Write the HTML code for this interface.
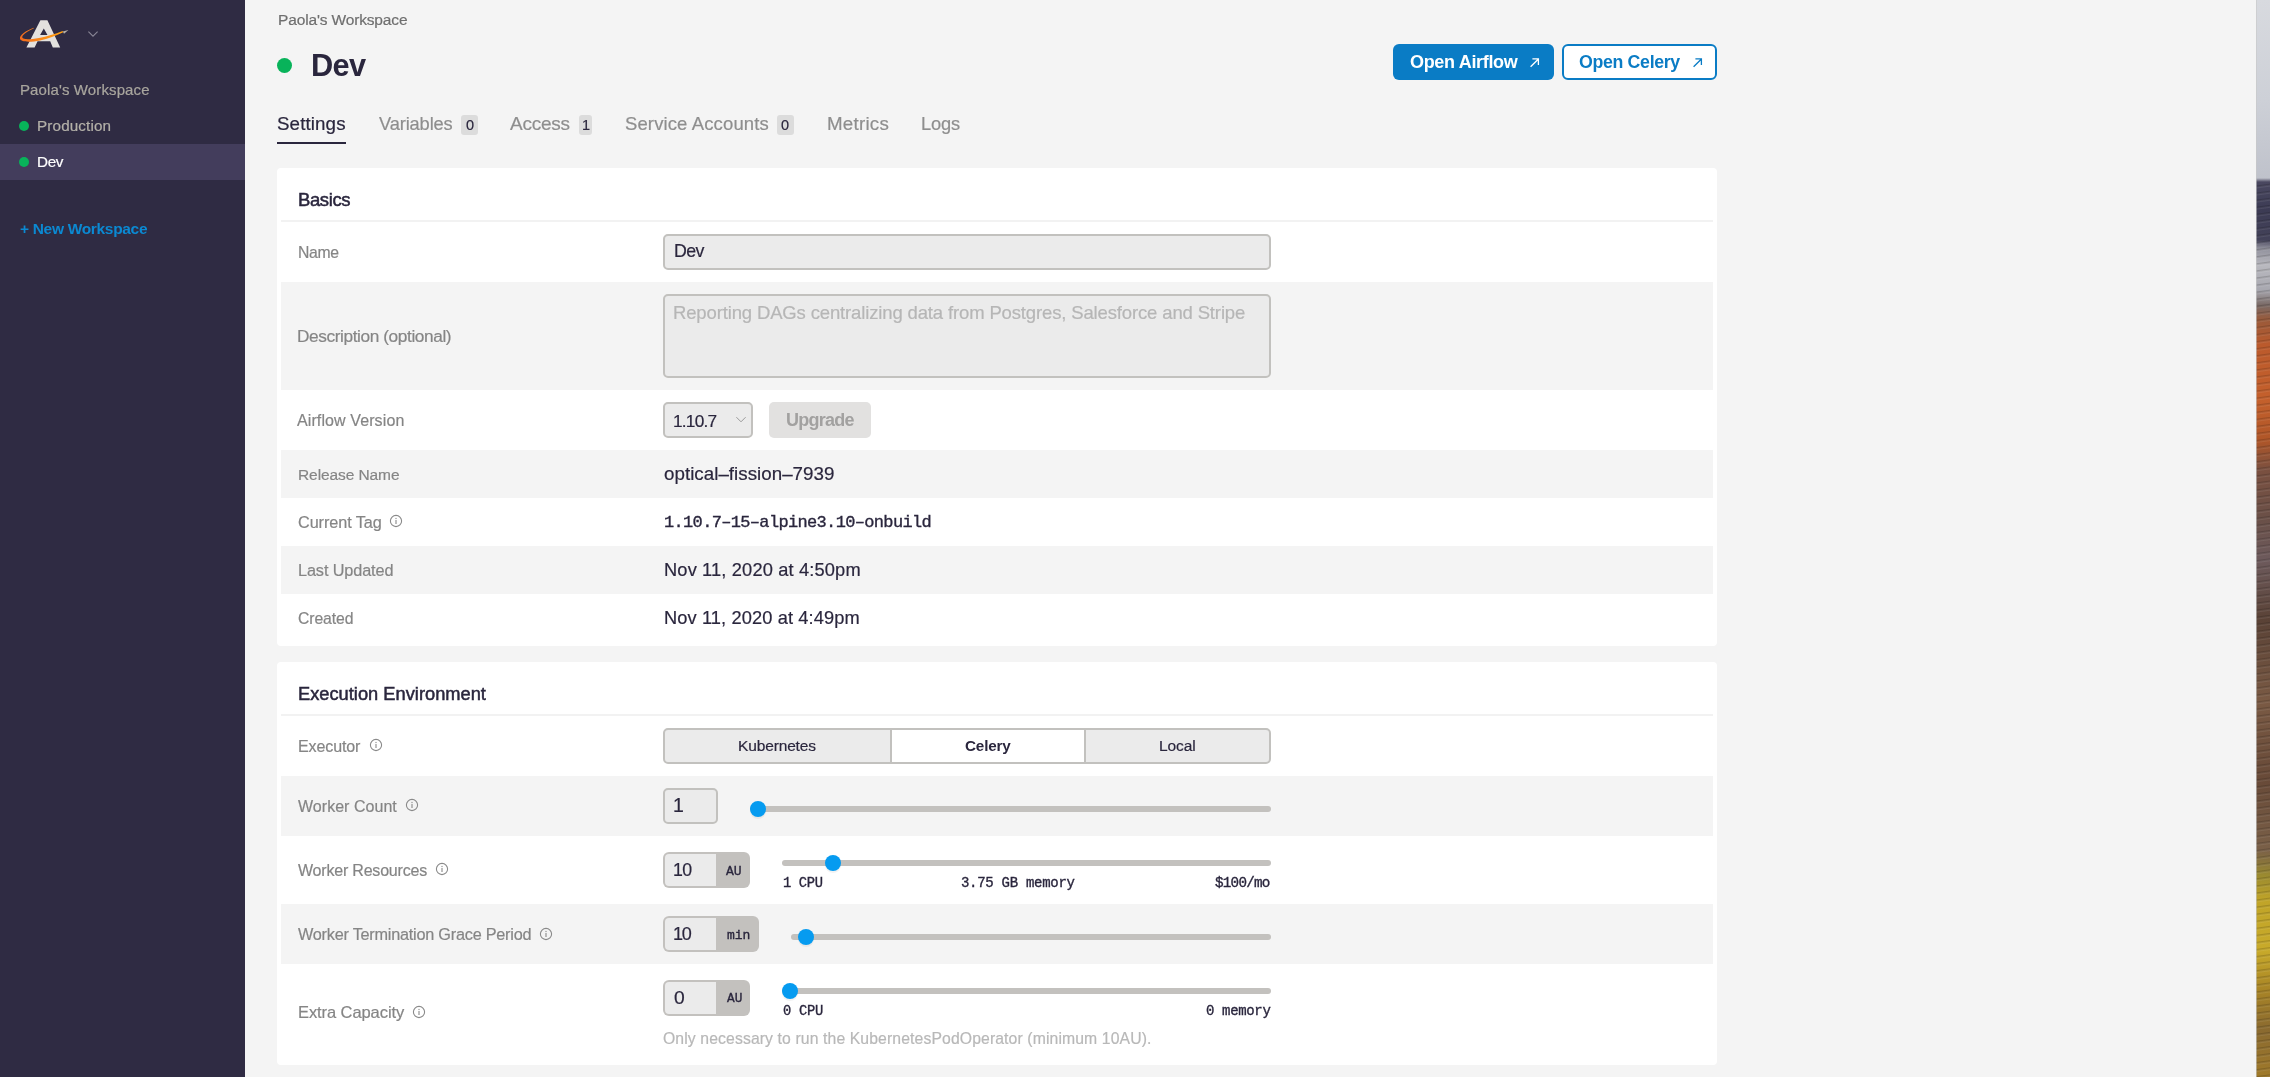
<!DOCTYPE html>
<html><head><meta charset="utf-8"><style>
html,body{margin:0;padding:0;width:2270px;height:1077px;overflow:hidden;background:#f4f4f4;}
.b{position:absolute;}
.t{position:absolute;line-height:1;white-space:nowrap;will-change:transform;-webkit-text-stroke:0.2px currentColor;}
</style></head><body>
<div class="b" style="left:0px;top:0px;width:245px;height:1077px;background:#2f2b43;"></div>
<div class="b" style="left:0px;top:144px;width:245px;height:36px;background:#433d5c;"></div>
<svg class="b" style="left:0;top:0" width="120" height="60" viewBox="0 0 120 60">
<defs><linearGradient id="sw" x1="0" x2="1" y1="0" y2="0"><stop offset="0" stop-color="#f26a1f"/><stop offset="0.5" stop-color="#fb8a18"/><stop offset="1" stop-color="#ffa112"/></linearGradient></defs>
<path d="M40.4 20.3 L47.4 20.3 L60.2 47.6 L52.8 47.6 L50.2 41.2 L37.6 41.2 L34.6 47.6 L26.4 47.6 Z M43.8 28.6 L40.1 34.9 L47.5 34.9 Z" fill="#e3e1de" fill-rule="evenodd"/>
<path d="M33.6 27.8 C26 30.8, 19.2 35.2, 20.0 38.8 C20.9 42.4, 31 42.2, 40 40.4 C48 38.8, 56 35.6, 63.2 32.2 L62.6 31.0 C55 34, 47 36.6, 39 38.0 C30 39.6, 23.2 39.8, 22.3 37.6 C21.6 35.4, 27 31.4, 33.9 28.3 Z" fill="url(#sw)"/>
<path d="M62.8 31.4 L68.4 30.0 L64.0 33.8 Z" fill="#b8b2a8"/>
<path d="M88.4 31.6 L93 36.2 L97.6 31.6" fill="none" stroke="#8a8796" stroke-width="1.1"/>
</svg>
<div class="t" style="left:19.50px;top:82.00px;font-size:15.00px;color:#a9a69e;font-weight:400;font-family:'Liberation Sans', sans-serif;letter-spacing:0.116px;">Paola's Workspace</div>
<div class="b" style="left:19px;top:121px;width:10px;height:10px;border-radius:50%;background:#08b35a;"></div>
<div class="t" style="left:37.30px;top:118.00px;font-size:15.25px;color:#b4b1a9;font-weight:400;font-family:'Liberation Sans', sans-serif;letter-spacing:0.132px;">Production</div>
<div class="b" style="left:19px;top:157px;width:10px;height:10px;border-radius:50%;background:#08b35a;"></div>
<div class="t" style="left:37.30px;top:154.00px;font-size:15.25px;color:#ffffff;font-weight:400;font-family:'Liberation Sans', sans-serif;letter-spacing:-0.357px;">Dev</div>
<div class="t" style="left:19.70px;top:221.00px;font-size:15.50px;color:#0b89d2;font-weight:700;font-family:'Liberation Sans', sans-serif;letter-spacing:-0.318px;-webkit-text-stroke:0;">+ New Workspace</div>
<div class="b" style="left:245px;top:0px;width:2011px;height:1077px;background:#f4f4f4;"></div>
<div class="b" style="left:2256px;top:0px;width:14px;height:1077px;background:linear-gradient(180deg,#d8dadf 0px,#cdd0d7 100px,#bfc2cb 178px,#4a4860 182px,#3c3b54 210px,#434259 240px,#8e8e9a 248px,#b9b9bf 265px,#a8a8b0 290px,#7a6a66 305px,#9a5a3a 320px,#bb5a2c 345px,#c4602c 400px,#b05628 440px,#7a5040 470px,#6a5048 520px,#6d5a5c 560px,#5a4236 620px,#7a5a44 700px,#684a38 780px,#7a6048 850px,#9a8a30 875px,#c0a428 900px,#c8aa2a 950px,#a88426 990px,#8a6a30 1030px,#a07a2a 1077px);"></div>
<div class="b" style="left:2256px;top:182px;width:14px;height:895px;background:repeating-linear-gradient(172deg,rgba(0,0,0,0) 0px,rgba(0,0,0,0) 3px,rgba(0,0,0,0.16) 4px,rgba(255,255,255,0.08) 6px,rgba(0,0,0,0) 7px);"></div>
<div class="b" style="left:2256px;top:0px;width:1px;height:1077px;background:rgba(200,200,200,0.6);"></div>
<div class="t" style="left:277.50px;top:12.00px;font-size:15.50px;color:#6f6f6f;font-weight:400;font-family:'Liberation Sans', sans-serif;letter-spacing:-0.150px;">Paola's Workspace</div>
<div class="b" style="left:277px;top:58px;width:15px;height:15px;border-radius:50%;background:#08b35a;"></div>
<div class="t" style="left:311.00px;top:51.00px;font-size:30.75px;color:#2a263d;font-weight:700;font-family:'Liberation Sans', sans-serif;letter-spacing:-0.698px;-webkit-text-stroke:0;">Dev</div>
<div class="b" style="left:1393px;top:44px;width:161px;height:36px;background:#0a7cc5;border-radius:6px;"></div>
<div class="t" style="left:1409.60px;top:53.00px;font-size:18.00px;color:#ffffff;font-weight:700;font-family:'Liberation Sans', sans-serif;letter-spacing:-0.324px;-webkit-text-stroke:0;">Open Airflow</div>
<div class="b" style="left:1562px;top:44px;width:155px;height:36px;background:#ffffff;border:2px solid #0a7cc5;border-radius:6px;box-sizing:border-box;"></div>
<div class="t" style="left:1578.70px;top:54.00px;font-size:17.75px;color:#0a7cc5;font-weight:700;font-family:'Liberation Sans', sans-serif;letter-spacing:-0.337px;-webkit-text-stroke:0;">Open Celery</div>
<svg class="b" style="left:1528.7px;top:57px" width="12" height="12" viewBox="0 0 12 12"><path d="M1.6 9.8 L9.2 2.2 M3.4 1.9 L9.4 1.9 L9.4 7.9" fill="none" stroke="#ffffff" stroke-width="1.3"/></svg>
<svg class="b" style="left:1691.7px;top:57px" width="12" height="12" viewBox="0 0 12 12"><path d="M1.6 9.8 L9.2 2.2 M3.4 1.9 L9.4 1.9 L9.4 7.9" fill="none" stroke="#0a7cc5" stroke-width="1.3"/></svg>
<div class="t" style="left:277.40px;top:115.00px;font-size:18.75px;color:#2a263d;font-weight:400;font-family:'Liberation Sans', sans-serif;letter-spacing:0.108px;">Settings</div>
<div class="b" style="left:277px;top:142px;width:69px;height:2px;background:#2a263d;"></div>
<div class="t" style="left:378.70px;top:115.00px;font-size:18.25px;color:#8e8e8e;font-weight:400;font-family:'Liberation Sans', sans-serif;letter-spacing:-0.129px;">Variables</div>
<div class="b" style="left:461px;top:115px;width:17px;height:20px;background:#dcdcdc;border-radius:3px;"></div>
<div class="t" style="left:465.50px;top:118.00px;font-size:14.50px;color:#2a263d;font-weight:400;font-family:'Liberation Sans', sans-serif;">0</div>
<div class="t" style="left:510.20px;top:114.00px;font-size:19.00px;color:#8e8e8e;font-weight:400;font-family:'Liberation Sans', sans-serif;letter-spacing:-0.227px;">Access</div>
<div class="b" style="left:579px;top:115px;width:13px;height:20px;background:#dcdcdc;border-radius:3px;"></div>
<div class="t" style="left:582.40px;top:118.00px;font-size:14.50px;color:#2a263d;font-weight:400;font-family:'Liberation Sans', sans-serif;">1</div>
<div class="t" style="left:624.60px;top:115.00px;font-size:18.50px;color:#8e8e8e;font-weight:400;font-family:'Liberation Sans', sans-serif;letter-spacing:0.120px;">Service Accounts</div>
<div class="b" style="left:777px;top:115px;width:17px;height:20px;background:#dcdcdc;border-radius:3px;"></div>
<div class="t" style="left:781.30px;top:118.00px;font-size:14.50px;color:#2a263d;font-weight:400;font-family:'Liberation Sans', sans-serif;">0</div>
<div class="t" style="left:826.50px;top:115.00px;font-size:18.75px;color:#8e8e8e;font-weight:400;font-family:'Liberation Sans', sans-serif;letter-spacing:0.231px;">Metrics</div>
<div class="t" style="left:921.10px;top:115.00px;font-size:18.25px;color:#8e8e8e;font-weight:400;font-family:'Liberation Sans', sans-serif;letter-spacing:-0.189px;">Logs</div>
<div class="b" style="left:277px;top:168px;width:1440px;height:478px;background:#fff;border-radius:4px;"></div>
<div class="t" style="left:297.80px;top:191.00px;font-size:18.50px;color:#2a263d;font-weight:400;font-family:'Liberation Sans', sans-serif;letter-spacing:-0.377px;-webkit-text-stroke:0.5px #2a263d;">Basics</div>
<div class="b" style="left:281px;top:220px;width:1432px;height:2px;background:#f2f2f2;"></div>
<div class="t" style="left:297.80px;top:245.00px;font-size:15.75px;color:#858585;font-weight:400;font-family:'Liberation Sans', sans-serif;letter-spacing:-0.307px;">Name</div>
<div class="b" style="left:663px;top:234px;width:608px;height:36px;background:#ebebeb;border:2px solid #c2c1be;border-radius:5px;box-sizing:border-box;"></div>
<div class="t" style="left:674.20px;top:243.00px;font-size:17.75px;color:#2a263d;font-weight:400;font-family:'Liberation Sans', sans-serif;letter-spacing:-0.580px;">Dev</div>
<div class="b" style="left:281px;top:282px;width:1432px;height:108px;background:#f4f4f4;"></div>
<div class="t" style="left:297.20px;top:328.00px;font-size:17.25px;color:#858585;font-weight:400;font-family:'Liberation Sans', sans-serif;letter-spacing:-0.400px;">Description (optional)</div>
<div class="b" style="left:663px;top:294px;width:608px;height:84px;background:#ebebeb;border:2px solid #c2c1be;border-radius:5px;box-sizing:border-box;"></div>
<div class="t" style="left:673.40px;top:304.00px;font-size:18.50px;color:#b6b6b6;font-weight:400;font-family:'Liberation Sans', sans-serif;letter-spacing:-0.143px;">Reporting DAGs centralizing data from Postgres, Salesforce and Stripe</div>
<div class="t" style="left:297.20px;top:413.00px;font-size:16.00px;color:#858585;font-weight:400;font-family:'Liberation Sans', sans-serif;letter-spacing:0.105px;">Airflow Version</div>
<div class="b" style="left:663px;top:402px;width:90px;height:36px;background:#ebebeb;border:2px solid #c2c1be;border-radius:5px;box-sizing:border-box;"></div>
<div class="t" style="left:672.80px;top:413.00px;font-size:17.25px;color:#2a263d;font-weight:400;font-family:'Liberation Sans', sans-serif;letter-spacing:-0.771px;">1.10.7</div>
<svg class="b" style="left:734px;top:414px" width="14" height="10" viewBox="0 0 14 10"><path d="M2.4 3.2 L7 7.8 L11.6 3.2" fill="none" stroke="#9a9a9a" stroke-width="1"/></svg>
<div class="b" style="left:769px;top:402px;width:102px;height:36px;background:#e2e1e0;border-radius:5px;"></div>
<div class="t" style="left:785.70px;top:411.00px;font-size:18.00px;color:#a2a1a0;font-weight:700;font-family:'Liberation Sans', sans-serif;letter-spacing:-0.768px;-webkit-text-stroke:0;">Upgrade</div>
<div class="b" style="left:281px;top:450px;width:1432px;height:48px;background:#f4f4f4;"></div>
<div class="t" style="left:297.80px;top:467.00px;font-size:15.50px;color:#858585;font-weight:400;font-family:'Liberation Sans', sans-serif;letter-spacing:-0.092px;">Release Name</div>
<div class="t" style="left:663.60px;top:465.00px;font-size:18.75px;color:#2a263d;font-weight:400;font-family:'Liberation Sans', sans-serif;letter-spacing:0.026px;">optical–fission–7939</div>
<div class="t" style="left:297.60px;top:514.00px;font-size:16.25px;color:#858585;font-weight:400;font-family:'Liberation Sans', sans-serif;letter-spacing:-0.081px;">Current Tag</div>
<svg class="b" style="left:389px;top:514px" width="14" height="14" viewBox="0 0 14 14"><circle cx="7" cy="7" r="5.6" fill="none" stroke="#8a8a8a" stroke-width="1.1"/><rect x="6.45" y="6" width="1.1" height="4" fill="#8a8a8a"/><rect x="6.45" y="3.9" width="1.1" height="1.2" fill="#8a8a8a"/></svg>
<div class="t" style="left:663.90px;top:514.00px;font-size:17.00px;color:#2a263d;font-weight:400;font-family:'Liberation Mono', monospace;letter-spacing:-0.665px;-webkit-text-stroke:0.35px currentColor;">1.10.7–15–alpine3.10–onbuild</div>
<div class="b" style="left:281px;top:546px;width:1432px;height:48px;background:#f4f4f4;"></div>
<div class="t" style="left:297.80px;top:562.00px;font-size:16.25px;color:#858585;font-weight:400;font-family:'Liberation Sans', sans-serif;letter-spacing:-0.106px;">Last Updated</div>
<div class="t" style="left:663.70px;top:561.00px;font-size:18.25px;color:#2a263d;font-weight:400;font-family:'Liberation Sans', sans-serif;letter-spacing:0.150px;">Nov 11, 2020 at 4:50pm</div>
<div class="t" style="left:297.80px;top:611.00px;font-size:15.75px;color:#858585;font-weight:400;font-family:'Liberation Sans', sans-serif;letter-spacing:-0.090px;">Created</div>
<div class="t" style="left:663.70px;top:609.00px;font-size:18.25px;color:#2a263d;font-weight:400;font-family:'Liberation Sans', sans-serif;letter-spacing:0.107px;">Nov 11, 2020 at 4:49pm</div>
<div class="b" style="left:277px;top:662px;width:1440px;height:403px;background:#fff;border-radius:4px;"></div>
<div class="t" style="left:297.80px;top:685.00px;font-size:18.25px;color:#2a263d;font-weight:400;font-family:'Liberation Sans', sans-serif;letter-spacing:0.012px;-webkit-text-stroke:0.5px #2a263d;">Execution Environment</div>
<div class="b" style="left:281px;top:714px;width:1432px;height:2px;background:#f2f2f2;"></div>
<div class="t" style="left:297.80px;top:739.00px;font-size:16.00px;color:#858585;font-weight:400;font-family:'Liberation Sans', sans-serif;letter-spacing:-0.105px;">Executor</div>
<svg class="b" style="left:368.6px;top:737.9px" width="14" height="14" viewBox="0 0 14 14"><circle cx="7" cy="7" r="5.6" fill="none" stroke="#8a8a8a" stroke-width="1.1"/><rect x="6.45" y="6" width="1.1" height="4" fill="#8a8a8a"/><rect x="6.45" y="3.9" width="1.1" height="1.2" fill="#8a8a8a"/></svg>
<div class="b" style="left:663px;top:728px;width:608px;height:36px;background:#ebebeb;border:2px solid #c2c1be;border-radius:5px;box-sizing:border-box;"></div>
<div class="b" style="left:890px;top:730px;width:196px;height:32px;background:#fff;border-left:2px solid #c2c1be;border-right:2px solid #c2c1be;box-sizing:border-box;"></div>
<div class="t" style="left:738.30px;top:738.00px;font-size:15.50px;color:#2a263d;font-weight:400;font-family:'Liberation Sans', sans-serif;letter-spacing:-0.142px;">Kubernetes</div>
<div class="t" style="left:964.90px;top:738.00px;font-size:15.25px;color:#2a263d;font-weight:700;font-family:'Liberation Sans', sans-serif;letter-spacing:-0.167px;-webkit-text-stroke:0;">Celery</div>
<div class="t" style="left:1159.00px;top:738.00px;font-size:15.50px;color:#2a263d;font-weight:400;font-family:'Liberation Sans', sans-serif;letter-spacing:-0.065px;">Local</div>
<div class="b" style="left:281px;top:776px;width:1432px;height:60px;background:#f4f4f4;"></div>
<div class="t" style="left:297.80px;top:799.00px;font-size:16.00px;color:#858585;font-weight:400;font-family:'Liberation Sans', sans-serif;letter-spacing:0.036px;">Worker Count</div>
<svg class="b" style="left:404.9px;top:797.9px" width="14" height="14" viewBox="0 0 14 14"><circle cx="7" cy="7" r="5.6" fill="none" stroke="#8a8a8a" stroke-width="1.1"/><rect x="6.45" y="6" width="1.1" height="4" fill="#8a8a8a"/><rect x="6.45" y="3.9" width="1.1" height="1.2" fill="#8a8a8a"/></svg>
<div class="b" style="left:663px;top:788px;width:55px;height:36px;background:#ebebeb;border:2px solid #c2c1be;border-radius:5px;box-sizing:border-box;"></div>
<div class="t" style="left:672.80px;top:796.00px;font-size:19.50px;color:#2a263d;font-weight:400;font-family:'Liberation Sans', sans-serif;">1</div>
<div class="b" style="left:750px;top:806px;width:521px;height:6px;background:#c3c1be;border-radius:3px;"></div>
<div class="b" style="left:750px;top:803px;width:16px;height:16px;background:rgba(0,0,0,0.05);border-radius:50%;"></div>
<div class="b" style="left:750px;top:801px;width:16px;height:16px;background:#069bf0;border-radius:50%;"></div>
<div class="t" style="left:297.50px;top:863.00px;font-size:16.00px;color:#858585;font-weight:400;font-family:'Liberation Sans', sans-serif;letter-spacing:-0.199px;">Worker Resources</div>
<svg class="b" style="left:435px;top:862.4px" width="14" height="14" viewBox="0 0 14 14"><circle cx="7" cy="7" r="5.6" fill="none" stroke="#8a8a8a" stroke-width="1.1"/><rect x="6.45" y="6" width="1.1" height="4" fill="#8a8a8a"/><rect x="6.45" y="3.9" width="1.1" height="1.2" fill="#8a8a8a"/></svg>
<div class="b" style="left:663px;top:852px;width:87px;height:36px;background:#c3c1be;border-radius:6px;"></div>
<div class="b" style="left:665px;top:854px;width:51px;height:32px;background:#ebebeb;border-radius:4px 0 0 4px;"></div>
<div class="t" style="left:672.80px;top:862.00px;font-size:17.75px;color:#2a263d;font-weight:400;font-family:'Liberation Sans', sans-serif;letter-spacing:-0.738px;">10</div>
<div class="t" style="left:726.30px;top:865.00px;font-size:13.00px;color:#2a263d;font-weight:400;font-family:'Liberation Mono', monospace;-webkit-text-stroke:0.35px currentColor;">AU</div>
<div class="b" style="left:782px;top:860px;width:489px;height:6px;background:#c3c1be;border-radius:3px;"></div>
<div class="b" style="left:825px;top:857px;width:16px;height:16px;background:rgba(0,0,0,0.05);border-radius:50%;"></div>
<div class="b" style="left:825px;top:855px;width:16px;height:16px;background:#069bf0;border-radius:50%;"></div>
<div class="t" style="left:783.10px;top:877.00px;font-size:13.75px;color:#2a263d;font-weight:400;font-family:'Liberation Mono', monospace;letter-spacing:-0.338px;-webkit-text-stroke:0.35px currentColor;">1 CPU</div>
<div class="t" style="left:961.30px;top:876.00px;font-size:14.00px;color:#2a263d;font-weight:400;font-family:'Liberation Mono', monospace;letter-spacing:-0.278px;-webkit-text-stroke:0.35px currentColor;">3.75 GB memory</div>
<div class="t" style="left:1214.60px;top:876.00px;font-size:14.25px;color:#2a263d;font-weight:400;font-family:'Liberation Mono', monospace;letter-spacing:-0.744px;-webkit-text-stroke:0.35px currentColor;">$100/mo</div>
<div class="b" style="left:281px;top:904px;width:1432px;height:60px;background:#f4f4f4;"></div>
<div class="t" style="left:297.50px;top:926.00px;font-size:16.25px;color:#858585;font-weight:400;font-family:'Liberation Sans', sans-serif;letter-spacing:-0.234px;">Worker Termination Grace Period</div>
<svg class="b" style="left:539px;top:927px" width="14" height="14" viewBox="0 0 14 14"><circle cx="7" cy="7" r="5.6" fill="none" stroke="#8a8a8a" stroke-width="1.1"/><rect x="6.45" y="6" width="1.1" height="4" fill="#8a8a8a"/><rect x="6.45" y="3.9" width="1.1" height="1.2" fill="#8a8a8a"/></svg>
<div class="b" style="left:663px;top:916px;width:96px;height:36px;background:#c3c1be;border-radius:6px;"></div>
<div class="b" style="left:665px;top:918px;width:51px;height:32px;background:#ebebeb;border-radius:4px 0 0 4px;"></div>
<div class="t" style="left:673.20px;top:925.00px;font-size:18.00px;color:#2a263d;font-weight:400;font-family:'Liberation Sans', sans-serif;letter-spacing:-1.216px;">10</div>
<div class="t" style="left:726.50px;top:929.00px;font-size:13.00px;color:#2a263d;font-weight:400;font-family:'Liberation Mono', monospace;-webkit-text-stroke:0.35px currentColor;">min</div>
<div class="b" style="left:791px;top:934px;width:480px;height:6px;background:#c3c1be;border-radius:3px;"></div>
<div class="b" style="left:798px;top:931px;width:16px;height:16px;background:rgba(0,0,0,0.05);border-radius:50%;"></div>
<div class="b" style="left:798px;top:929px;width:16px;height:16px;background:#069bf0;border-radius:50%;"></div>
<div class="t" style="left:297.50px;top:1004.00px;font-size:16.50px;color:#858585;font-weight:400;font-family:'Liberation Sans', sans-serif;letter-spacing:-0.083px;">Extra Capacity</div>
<svg class="b" style="left:412px;top:1004.5px" width="14" height="14" viewBox="0 0 14 14"><circle cx="7" cy="7" r="5.6" fill="none" stroke="#8a8a8a" stroke-width="1.1"/><rect x="6.45" y="6" width="1.1" height="4" fill="#8a8a8a"/><rect x="6.45" y="3.9" width="1.1" height="1.2" fill="#8a8a8a"/></svg>
<div class="b" style="left:663px;top:980px;width:87px;height:36px;background:#c3c1be;border-radius:6px;"></div>
<div class="b" style="left:665px;top:982px;width:51px;height:32px;background:#ebebeb;border-radius:4px 0 0 4px;"></div>
<div class="t" style="left:673.60px;top:988.00px;font-size:19.25px;color:#2a263d;font-weight:400;font-family:'Liberation Sans', sans-serif;">0</div>
<div class="t" style="left:726.50px;top:993.00px;font-size:12.75px;color:#2a263d;font-weight:400;font-family:'Liberation Mono', monospace;-webkit-text-stroke:0.35px currentColor;">AU</div>
<div class="b" style="left:782px;top:988px;width:489px;height:6px;background:#c3c1be;border-radius:3px;"></div>
<div class="b" style="left:782px;top:985px;width:16px;height:16px;background:rgba(0,0,0,0.05);border-radius:50%;"></div>
<div class="b" style="left:782px;top:983px;width:16px;height:16px;background:#069bf0;border-radius:50%;"></div>
<div class="t" style="left:782.90px;top:1005.00px;font-size:13.75px;color:#2a263d;font-weight:400;font-family:'Liberation Mono', monospace;letter-spacing:-0.262px;-webkit-text-stroke:0.35px currentColor;">0 CPU</div>
<div class="t" style="left:1205.70px;top:1004.00px;font-size:14.00px;color:#2a263d;font-weight:400;font-family:'Liberation Mono', monospace;letter-spacing:-0.345px;-webkit-text-stroke:0.35px currentColor;">0 memory</div>
<div class="t" style="left:663.30px;top:1031.00px;font-size:15.75px;color:#b8b8b8;font-weight:400;font-family:'Liberation Sans', sans-serif;letter-spacing:0.112px;">Only necessary to run the KubernetesPodOperator (minimum 10AU).</div>
</body></html>
